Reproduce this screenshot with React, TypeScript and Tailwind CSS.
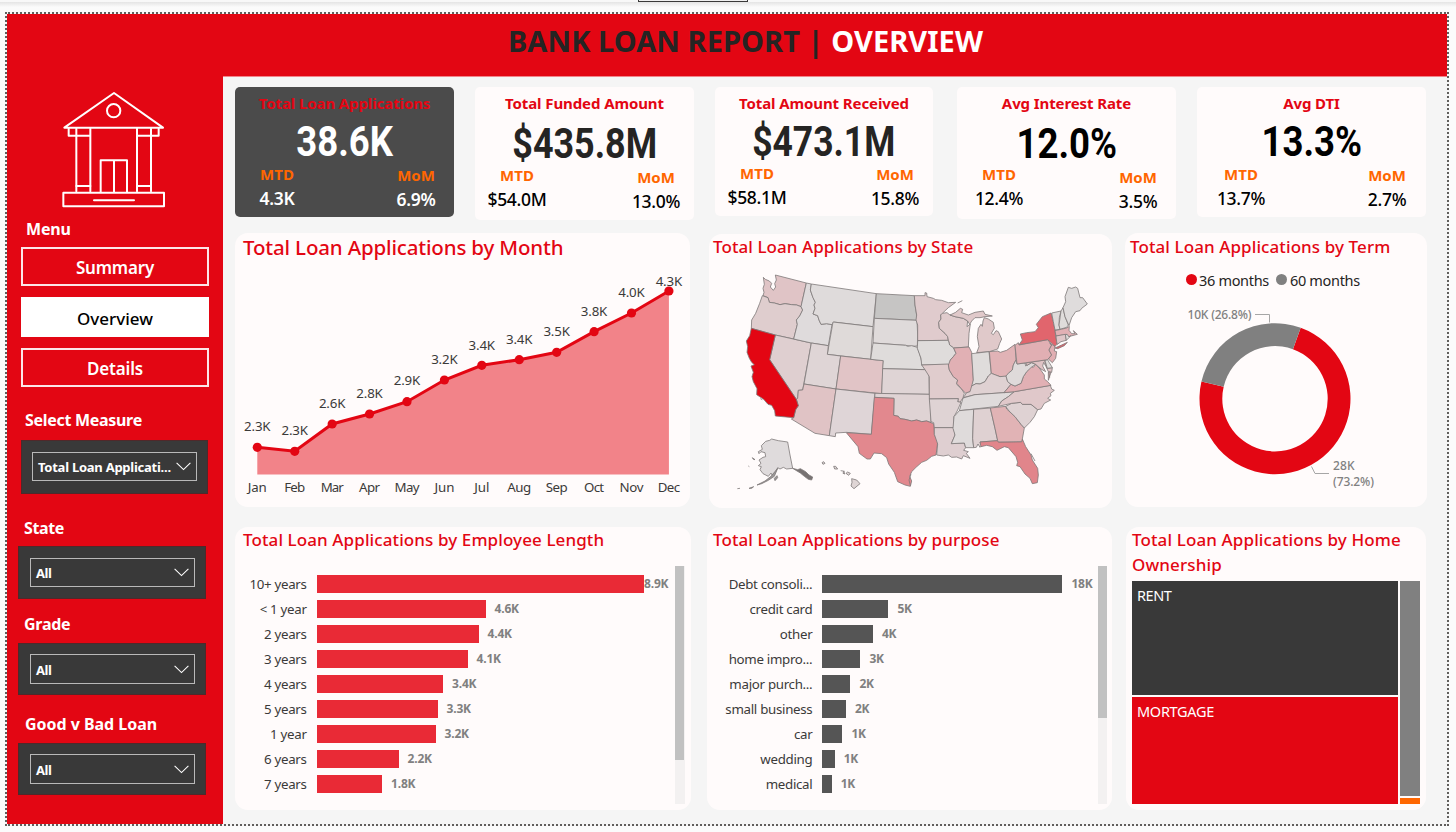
import React from "react";

const kpis = [
  { title: "Total Loan Applications", value: "38.6K", mtd: "4.3K", mom: "6.9%", card: "w-[219px] h-[130px] bg-[#4b4b4b]", valueCls: "text-white mt-[4px]", scale: "scale-x-[0.87]", row: "pl-1", left: "mt-[-3px]", right: "mt-[-2px]", num: "text-white font-semibold" },
  { title: "Total Funded Amount", value: "$435.8M", mtd: "$54.0M", mom: "13.0%", card: "ml-[21px] w-[219px] h-[133px] bg-[#fffbfb]", valueCls: "text-[#252423] mt-[6px]", scale: "scale-x-[0.855]", row: "pl-1", left: "mt-[-4px]", right: "mt-[-2px]", num: "text-black font-medium" },
  { title: "Total Amount Received", value: "$473.1M", mtd: "$58.1M", mom: "15.8%", card: "ml-[21px] w-[218px] h-[129px] bg-[#fffbfb]", valueCls: "text-[#252423] mt-[4px]", scale: "scale-x-[0.845]", row: "pl-1", left: "mt-[-4px]", right: "mt-[-3px]", num: "text-black font-medium" },
  { title: "Avg Interest Rate", value: "12.0%", mtd: "12.4%", mom: "3.5%", card: "ml-[24px] w-[219px] h-[132px] bg-[#fffbfb]", valueCls: "text-black mt-[6px]", scale: "scale-x-[0.87]", row: "pl-1", left: "mt-[-5px]", right: "mt-[-2px]", num: "text-black font-medium" },
  { title: "Avg DTI", value: "13.3%", mtd: "13.7%", mom: "2.7%", card: "ml-[21px] w-[229px] h-[130px] bg-[#fffbfb]", valueCls: "text-black mt-[4px]", scale: "scale-x-[0.87]", row: "pl-1.5 pr-px", left: "mt-[-3px]", right: "mt-[-2px]", num: "text-black font-medium" },
];

const months = [
  { m: "Jan", v: "2.3K", y: 447.3, ly: 426.5 },
  { m: "Feb", v: "2.3K", y: 451.3, ly: 430.5 },
  { m: "Mar", v: "2.6K", y: 424, ly: 403.5 },
  { m: "Apr", v: "2.8K", y: 414, ly: 393.3 },
  { m: "May", v: "2.9K", y: 401.7, ly: 380.5 },
  { m: "Jun", v: "3.2K", y: 380, ly: 359.5 },
  { m: "Jul", v: "3.4K", y: 365.3, ly: 345.3 },
  { m: "Aug", v: "3.4K", y: 359.7, ly: 339.5 },
  { m: "Sep", v: "3.5K", y: 352.3, ly: 331.3 },
  { m: "Oct", v: "3.8K", y: 331.7, ly: 311.3 },
  { m: "Nov", v: "4.0K", y: 313, ly: 292.3 },
  { m: "Dec", v: "4.3K", y: 291, ly: 281.3 },
];
const monthX = (i: number) => 257.3 + 37.42 * i;
const labelWidths: Record<string, number> = { Jan: 19, Feb: 21, Mar: 23, Apr: 21, May: 25, Jun: 20, Jul: 15, Aug: 24, Sep: 22, Oct: 20, Nov: 24, Dec: 22.5 };

const employee = [
  { l: "10+ years", v: "8.9K", w: 327.5 },
  { l: "< 1 year", v: "4.6K", w: 169 },
  { l: "2 years", v: "4.4K", w: 162 },
  { l: "3 years", v: "4.1K", w: 151 },
  { l: "4 years", v: "3.4K", w: 126.5 },
  { l: "5 years", v: "3.3K", w: 121 },
  { l: "1 year", v: "3.2K", w: 119 },
  { l: "6 years", v: "2.2K", w: 82 },
  { l: "7 years", v: "1.8K", w: 65.5 },
];

const purpose = [
  { l: "Debt consoli...", v: "18K", w: 240 },
  { l: "credit card", v: "5K", w: 66 },
  { l: "other", v: "4K", w: 50.5 },
  { l: "home impro...", v: "3K", w: 38 },
  { l: "major purch...", v: "2K", w: 28 },
  { l: "small business", v: "2K", w: 23.5 },
  { l: "car", v: "1K", w: 20 },
  { l: "wedding", v: "1K", w: 12.3 },
  { l: "medical", v: "1K", w: 9.3 },
];

const west: [string, string][] = [
  ["#e0c4c6", "M85,37 L91,43 L103,48 L110,55 L106,66 L115,76 L122,66 L119,56 L124,45 L121,30 L214,54 L198,125 L185,120 L170,119 L150,116 L135,119 L118,114 L103,112 L99,98 L84,92 L87,82 L84,70 L88,58 Z"],
  ["#dfcdce", "M82,92 L99,98 L103,112 L118,114 L135,119 L150,116 L170,119 L185,120 L198,125 L203,135 L194,153 L184,165 L187,178 L176,222 L121,210 L49,190 L50,165 L62,145 L74,115 Z"],
  ["#dfcfd0", "M121,210 L229,234 L203,375 L190,376 L188,400 L184,403 L104,284 Z"],
  ["#dfdbdc", "M214,54 L229,57 L226,75 L234,98 L241,112 L237,120 L240,130 L234,147 L248,152 L252,165 L258,178 L275,176 L291,179 L280,242 L229,234 L176,222 L187,178 L184,165 L194,153 L203,135 L198,125 Z"],
  ["#dfdbdb", "M229,57 L424,86 L414,185 L296,171 L291,179 L275,176 L258,178 L252,165 L248,152 L234,147 L240,130 L237,120 L241,112 L234,98 L226,75 Z"],
  ["#dfdad9", "M294,171 L414,185 L407,283 L277,268 Z"],
  ["#dfd5d6", "M229,234 L280,242 L277,268 L317,273 L303,372 L207,357 Z"],
  ["#e1c4c6", "M317,273 L445,287 L440,386 L303,372 Z"],
  ["#e0c3c5", "M207,357 L303,372 L283,512 L240,505 L169,462 L176,458 L182,434 L190,422 L184,403 L188,400 L190,376 L203,375 Z"],
  ["#dfd5d7", "M303,372 L420,385 L409,508 L334,502 L302,504 L301,515 L283,512 Z"],
  ["#c6c5c4", "M424,86 L538,92 L540,120 L545,150 L546,166 L418,160 Z"],
  ["#dfdada", "M418,160 L546,166 L548,210 L547,243 L530,244 L512,241 L414,234 Z"],
  ["#dfdcdb", "M414,234 L512,241 L518,244 L530,242 L547,247 L555,270 L562,298 L570,314 L443,311 L445,287 L407,283 Z"],
  ["#dfd4d5", "M443,311 L570,314 L580,322 L582,335 L583,388 L440,386 Z"],
  ["#dfd3d4", "M420,385 L583,388 L588,430 L588,473 L575,468 L560,470 L545,465 L530,468 L510,463 L495,461 L490,454 L476,451 L477,400 L419,397 Z"],
  ["#e2888e", "M418,397 L477,400 L476,451 L490,454 L495,461 L510,463 L530,468 L545,465 L560,470 L575,468 L588,473 L597,477 L598,508 L608,530 L606,550 L603,570 L590,574 L575,586 L560,592 L543,607 L530,620 L524,634 L530,648 L526,664 L510,660 L488,650 L478,622 L461,597 L455,578 L440,566 L417,564 L406,582 L396,582 L373,565 L369,545 L334,503 L409,508 Z"],
  ["#e30613", "M49,190 L121,210 L104,284 L184,403 L190,422 L182,434 L176,458 L121,453 L119,437 L110,421 L99,418 L86,403 L65,389 L66,371 L55,350 L51,335 L55,322 L48,303 L58,299 L50,292 L43,280 L36,262 L38,245 L34,228 L44,212 Z"],
  ["#dfdbdc", "M110,522 L130,527 L158,531 L165,570 L173,610 L155,612 L145,607 L135,612 L128,608 L122,620 L112,632 L108,624 L100,634 L84,626 L75,614 L79,605 L70,602 L78,595 L72,585 L84,577 L92,575 L90,563 L78,560 L72,566 L70,560 L82,553 L79,542 L92,529 L104,526 Z"],
  ["#dfd5d5", "M350,641 L365,645 L375,656 L357,671 L348,663 L351,652 Z"],
];

const east: [string, string][] = [
  ["#e0cbcd", "M28,92 L60,92 L60,83 L65,84 L66,95 L85,100 L92,104 L110,106 L130,113 L152,112 L130,128 L112,145 L107,150 L108,162 L101,172 L103,190 L120,205 L128,215 L130,226 L38,227 L38,180 L33,165 L35,150 L30,120 Z"],
  ["#e0cccd", "M112,145 L126,143 L135,150 L150,155 L175,160 L188,168 L186,185 L196,177 L192,205 L190,246 L146,249 L134,240 L130,226 L128,215 L120,205 L103,190 L101,172 L108,162 L107,150 Z"],
  ["#e0c9ca", "M135,150 L152,142 L166,130 L173,133 L170,143 L190,150 L210,142 L235,138 L240,148 L262,153 L240,155 L225,158 L210,158 L200,168 L194,178 L188,168 L175,160 L150,155 Z"],
  ["#e0c9ca", "M238,158 L250,162 L265,172 L268,190 L259,205 L265,209 L273,197 L280,200 L290,222 L284,235 L278,252 L253,260 L215,263 L222,245 L217,215 L220,190 L228,178 L232,184 L234,168 Z"],
  ["#dfdcdb", "M38,227 L130,226 L134,240 L146,249 L153,265 L145,275 L136,285 L135,299 L50,300 L48,280 L37,250 Z"],
  ["#e0cccd", "M50,300 L130,297 L133,315 L145,335 L158,345 L155,358 L170,372 L178,385 L174,398 L165,412 L158,410 L160,401 L73,402 L73,335 L60,314 Z"],
  ["#e1b0b4", "M146,249 L192,246 L200,262 L205,345 L203,362 L197,380 L182,385 L170,372 L155,355 L158,345 L145,335 L133,315 L130,300 L136,285 L145,275 L153,265 Z"],
  ["#dfdcdb", "M200,266 L252,260 L259,325 L250,333 L240,350 L225,357 L213,356 L200,363 L205,345 Z"],
  ["#e1b3b6", "M253,260 L278,258 L286,262 L305,256 L330,238 L333,285 L325,300 L322,315 L310,325 L303,335 L285,335 L272,330 L259,325 Z"],
  ["#dfd1d2", "M175,398 L185,383 L195,380 L200,363 L213,356 L225,357 L240,350 L250,333 L259,325 L272,330 L285,335 L303,333 L308,350 L318,358 L297,383 L210,389 Z"],
  ["#dfdbdb", "M174,399 L210,389 L297,383 L328,380 L310,395 L290,408 L280,424 L163,437 L168,420 Z"],
  ["#dfd3d4", "M73,402 L160,401 L158,410 L168,412 L158,435 L147,455 L146,488 L88,488 L86,473 L78,470 Z"],
  ["#dfcfd1", "M88,488 L146,488 L150,510 L139,536 L178,534 L182,548 L176,556 L190,560 L184,565 L195,580 L175,572 L170,582 L155,576 L140,577 L130,570 L115,573 L95,570 L98,537 L88,508 Z"],
  ["#dfdbdb", "M163,437 L206,433 L203,520 L206,548 L182,548 L178,534 L139,536 L150,510 L144,490 L147,455 Z"],
  ["#dfd1d2", "M206,433 L256,429 L270,490 L278,527 L225,531 L230,542 L225,547 L219,537 L214,547 L206,548 L203,520 Z"],
  ["#e1858b", "M225,531 L278,527 L280,531 L350,530 L352,522 L362,545 L378,570 L382,585 L398,610 L400,630 L397,653 L382,656 L375,640 L360,627 L345,605 L335,602 L338,592 L333,575 L310,548 L298,545 L276,556 L262,545 L245,541 L228,545 Z"],
  ["#e1b3b5", "M256,429 L302,424 L305,432 L330,455 L348,478 L358,489 L352,522 L350,530 L280,531 L278,527 L270,490 Z"],
  ["#dfd2d3", "M302,424 L320,415 L347,412 L352,418 L378,418 L398,434 L388,455 L375,472 L358,489 L348,478 L330,455 L312,438 Z"],
  ["#e0c8ca", "M328,380 L436,361 L440,372 L448,376 L436,385 L438,392 L428,400 L437,405 L418,415 L408,432 L398,434 L378,418 L352,418 L347,412 L320,415 L280,424 L290,408 L310,395 Z"],
  ["#e1b0b4", "M297,383 L318,358 L330,363 L348,355 L355,335 L365,320 L378,305 L385,307 L392,298 L405,312 L418,330 L418,342 L428,350 L438,361 L328,380 Z"],
  ["#dfdada", "M303,333 L310,325 L322,315 L325,300 L333,285 L336,297 L360,294 L362,303 L380,293 L392,298 L380,306 L365,320 L355,335 L348,355 L330,363 L318,358 L308,350 Z"],
  ["#e0c3c5", "M362,294 L418,285 L427,310 L442,308 L440,322 L430,320 L423,305 L416,292 L413,303 L422,320 L408,312 L392,298 L380,293 L366,301 Z"],
  ["#dfdcdb", "M420,287 L427,283 L433,293 L442,308 L427,310 Z"],
  ["#e1b0b4", "M430,321 L438,322 L430,346 Z"],
  ["#e1afb3", "M330,241 L340,233 L342,240 L428,224 L440,240 L432,255 L440,270 L428,284 L336,297 Z"],
  ["#e1aeb2", "M434,235 L450,243 L448,258 L455,260 L452,280 L442,293 L430,282 L440,270 L432,255 L440,240 Z"],
  ["#e1656d", "M342,239 L352,225 L346,207 L365,203 L390,200 L400,188 L394,178 L412,155 L438,144 L445,170 L450,195 L452,213 L456,238 L450,244 L428,224 Z"],
  ["#e1656d", "M450,249 L470,240 L487,232 L478,242 L458,251 Z"],
  ["#dfdbda", "M440,144 L468,138 L463,158 L462,180 L465,193 L450,195 L445,170 Z"],
  ["#dfdcdb", "M468,138 L474,128 L480,155 L490,180 L485,187 L465,193 L462,180 Z"],
  ["#dfdcdc", "M474,128 L482,110 L480,95 L490,67 L500,70 L512,66 L518,70 L525,98 L533,98 L547,117 L530,130 L525,137 L512,140 L500,158 L492,182 L480,155 Z"],
  ["#e1b0b4", "M450,197 L485,189 L493,184 L492,196 L500,206 L510,206 L505,197 L517,208 L498,213 L490,216 L486,208 L453,213 Z"],
  ["#e0c6c8", "M453,213 L481,208 L484,226 L468,230 L457,238 L455,230 Z"],
  ["#dfdcdb", "M481,208 L487,209 L493,217 L484,226 Z"],
];

function Bars({ rows, label, bar }: { rows: { l: string; v: string; w: number }[]; label: string; bar: string }) {
  return (
    <div className="flex flex-col">
      {rows.map((r) => (
        <div key={r.l} className="flex h-[25px] items-center">
          <div className={"shrink-0 pt-px text-right text-[13.3px] leading-5 tracking-[-0.3px] whitespace-nowrap text-[#3b3a39] " + label}>{r.l}</div>
          <div className={"h-[18px] shrink-0 " + bar} style={{ width: r.w }} />
          <div className={"text-[12px] leading-none font-bold tracking-[-0.2px] text-[#808080] " + (r.w > 300 ? "" : "ml-[9px]")}>{r.v}</div>
        </div>
      ))}
    </div>
  );
}

function Slicer({ text, box, field, cls }: { text: string; box: string; field: string; cls: string }) {
  return (
    <div className={"shrink-0 border border-[#50282a] bg-[#393939] " + box}>
      <div className={"flex items-center justify-between border border-[#b9b9b9] pr-[5px] pl-[5px] text-white " + field}>
        <span className={"pt-[3px] text-[13px] font-bold whitespace-nowrap " + cls}>{text}</span>
        <svg width="15" height="9" viewBox="0 0 15 9" fill="none" stroke="#fff" strokeWidth="1.1">
          <path d="M0.6 0.8 L7.5 7.6 L14.4 0.8" />
        </svg>
      </div>
    </div>
  );
}

function Donut() {
  const cx = 1275;
  const cy = 398.7;
  const R = 75.5;
  const r = 52.7;
  const p = (rad: number, deg: number) => {
    const a = (deg * Math.PI) / 180;
    return `${(cx + rad * Math.sin(a)).toFixed(2)} ${(cy - rad * Math.cos(a)).toFixed(2)}`;
  };
  const a0 = 19.9;
  const a1 = 283.1;
  return (
    <svg width="302" height="215" viewBox="1125 292 302 215">
      <path fill="#e30613" d={`M${p(R, a0)} A${R} ${R} 0 1 1 ${p(R, a1)} L${p(r, a1)} A${r} ${r} 0 1 0 ${p(r, a0)} Z`} />
      <path fill="#808080" d={`M${p(R, a1)} A${R} ${R} 0 0 1 ${p(R, a0)} L${p(r, a0)} A${r} ${r} 0 0 0 ${p(r, a1)} Z`} />
      <path d="M1255 314.5 H1269.5 V322.5 M1311.5 466.5 L1315 473.5 H1329" fill="none" stroke="#a6a6a6" />
      <g fill="#808080" fontSize="12" fontWeight="500">
        <text x="1187.5" y="319" textLength="64">10K (26.8%)</text>
        <text x="1333" y="470" textLength="21.5">28K</text>
        <text x="1333" y="486" textLength="41">(73.2%)</text>
      </g>
    </svg>
  );
}

export default function App() {
  return (
    <div className="relative flex h-[832px] w-[1456px] flex-col overflow-hidden bg-[#fbfbfb] font-['Noto_Sans','Open_Sans',sans-serif]">
      <div className="flex h-[12px] shrink-0 flex-col">
        <div className="h-[2px] bg-[#f8f8f8]">
          <div className="ml-[638px] h-[2px] w-[110px] border border-t-0 border-[#3b3a39] bg-[#f0f0f0]" />
        </div>
        <div className="h-[5px] bg-linear-to-b from-[#e4e4e4] to-[#fbfbfb]" />
      </div>

      <div className="ml-[5px] flex h-[814px] w-[1444px] shrink-0 flex-col border-2 border-dotted border-[#605e5c] bg-[#f5f5f5]">
        <header className="flex h-[62px] shrink-0 items-start bg-[#e30613] pt-[7px] pl-[501px]">
          <h1 className="text-[29px] leading-[40px] font-bold tracking-[0.07px] whitespace-nowrap text-[#252423]">
            BANK LOAN REPORT | <span className="text-white">OVERVIEW</span>
          </h1>
        </header>

        <div className="flex h-[748px]">
          <aside className="flex w-[216px] shrink-0 flex-col bg-[#e30613] text-white">
            <svg className="mt-[14px] ml-[53px] shrink-0" width="106" height="120" viewBox="180 270 318 360" fill="none" stroke="#fff" strokeWidth="6" strokeLinejoin="round" strokeLinecap="round">
              <path d="M342 279 L193 383 H489 Z" />
              <circle cx="341" cy="332" r="20" />
              <path d="M206 386 V407 H270 M476 386 V407 H413" />
              <path d="M229 386 V574 M271 386 V574 M411 386 V574 M453 386 V574" />
              <path d="M229 558 H271 M411 558 H453" />
              <path d="M302 575 V481 H381 V575 M342 481 V575" />
              <path d="M190 578 H492 V619 H190 Z M282 601 H402" />
            </svg>
            <div className="mt-[9px] ml-[19px] h-5 text-[16px] leading-5 font-bold tracking-[-0.2px]">Menu</div>
            <nav className="flex flex-col pl-[14px] text-[17px]">
              <button className="mt-2 h-[39px] w-[188px] border-2 border-white/90 pt-[3px] font-semibold tracking-[-0.2px]">Summary</button>
              <button className="mt-[11px] h-[40px] w-[188px] bg-white pt-[3px] font-medium tracking-[0px] text-black">Overview</button>
              <button className="mt-[11px] h-[39px] w-[188px] border-2 border-white/90 pt-[3px] font-semibold tracking-[-0.2px]">Details</button>
            </nav>
            <div className="mt-[23px] ml-[18px] h-5 text-[16px] leading-5 font-bold tracking-[-0.3px]">Select Measure</div>
            <Slicer text="Total Loan Applicati..." cls="tracking-[-0.25px]" box="mt-[10px] ml-[14px] h-[54px] w-[187px] pt-[11px] pl-[10px]" field="h-[29px] w-[165px]" />
            <div className="mt-[24px] ml-[17px] h-5 text-[16px] leading-5 font-bold tracking-[-0.4px]">State</div>
            <Slicer text="All" cls="tracking-[-0.4px]" box="mt-[8px] ml-[11px] h-[53px] w-[188px] pt-[11px] pl-[11px]" field="h-[29px] w-[165px]" />
            <div className="mt-[15px] ml-[17px] h-5 text-[16px] leading-5 font-bold tracking-[-0.25px]">Grade</div>
            <Slicer text="All" cls="tracking-[-0.4px]" box="mt-[9px] ml-[11px] h-[52px] w-[188px] pt-[10px] pl-[11px]" field="h-[30px] w-[165px]" />
            <div className="mt-[19px] ml-[18px] h-5 text-[16px] leading-5 font-bold tracking-[-0.03px]">Good v Bad Loan</div>
            <Slicer text="All" cls="tracking-[-0.4px]" box="mt-[9px] ml-[11px] h-[52px] w-[188px] pt-[10px] pl-[11px]" field="h-[30px] w-[165px]" />
          </aside>

          <main className="flex grow flex-col border-t border-[#f2858b] pt-[10px] pl-3">
            <section className="flex h-[146px] shrink-0 items-start">
              {kpis.map((k) => (
                <div key={k.title} className={"flex shrink-0 flex-col items-center rounded-[5px] " + k.card}>
                  <div className="mt-[6px] h-5 text-[15px] leading-5 font-bold tracking-[-0.1px] whitespace-nowrap text-[#e30613]">{k.title}</div>
                  <div className={"flex h-[50px] items-center font-['Roboto',sans-serif] text-[42px] leading-[40px] font-bold " + k.valueCls}>
                    <span className={k.scale}>{k.value}</span>
                  </div>
                  <div className={"flex w-full items-start justify-between text-center " + k.row}>
                    <div className={"flex w-[76px] flex-col " + k.left}>
                      <span className="h-6 text-[15px] leading-5 font-bold text-[#ff6600]">MTD</span>
                      <span className={"h-5 text-[17.5px] leading-5 tracking-[-0.3px] " + k.num}>{k.mtd}</span>
                    </div>
                    <div className={"flex w-[76px] flex-col " + k.right}>
                      <span className="h-6 text-[15px] leading-5 font-bold text-[#ff6600]">MoM</span>
                      <span className={"h-5 text-[17.5px] leading-5 tracking-[-0.3px] " + k.num}>{k.mom}</span>
                    </div>
                  </div>
                </div>
              ))}
            </section>

            <section className="flex h-[294px] shrink-0 items-start text-[#e30613]">
              <div className="flex h-[274px] w-[455px] flex-col rounded-[13px] bg-[#fffbfb]">
                <h2 className="h-8 pl-2 text-[20.5px] leading-[29px] font-medium tracking-[-0.16px] whitespace-nowrap">Total Loan Applications by Month</h2>
                <svg width="455" height="240" viewBox="235 265 455 240">
                  <path fill="#f28389" d={"M257.3 474.5 " + months.map((d, i) => `L${monthX(i)} ${d.y}`).join(" ") + ` L${monthX(11)} 474.5 Z`} />
                  <polyline fill="none" stroke="#e30613" strokeWidth="3" points={months.map((d, i) => `${monthX(i)},${d.y}`).join(" ")} />
                  {months.map((d, i) => (
                    <g key={d.m} textAnchor="middle" fill="#3b3a39" fontSize="13.3">
                      <text x={monthX(i)} y={d.ly + 4.5} textLength="26.5">{d.v}</text>
                      <circle cx={monthX(i)} cy={d.y} r="4.6" fill="#e30613" />
                      <text x={monthX(i)} y="492" textLength={labelWidths[d.m]}>{d.m}</text>
                    </g>
                  ))}
                </svg>
              </div>

              <div className="mt-px ml-[19px] flex h-[274px] w-[403px] flex-col rounded-[13px] bg-[#fffbfb]">
                <h2 className="h-[31px] pl-1 text-[17px] leading-[26px] font-medium tracking-[0.07px] whitespace-nowrap">Total Loan Applications by State</h2>
                <svg className="ml-[26px]" width="360" height="235" viewBox="0 0 1080 705" stroke="#7d7879" strokeWidth="2.4" strokeLinejoin="round">
                  {west.map(([fill, d]) => (
                    <path key={d} fill={fill} d={d} />
                  ))}
                  <g fill="#9a9797">
                    <path d="M128,610 L118,634 L100,646 L80,656 L66,660 L90,648 L108,634 Z" />
                    <path d="M118,640 L126,632 L128,638 L120,647 Z M42,670 L56,665 L50,670 Z M7,671 L15,670" />
                    <path d="M52,578 L60,584 L55,583 Z M40,603 L43,605 M76,401 L82,404" />
                    <path fill="#777272" d="M173,610 L188,614 L196,611 L212,620 L222,630 L233,636 L230,645 L220,643 L208,634 L196,624 L186,618 Z" />
                  </g>
                  <g fill="#dfd5d5">
                    <path d="M261,593 L266,590 L270,595 L264,598 Z M296,604 L302,604 L308,612 L299,612 Z M317,617 L329,619 M326,619 L330,627 L324,625 Z M333,625 L338,621 L346,625 L341,631 Z" />
                  </g>
                  <g transform="translate(510 0)">
                    {east.map(([fill, d]) => (
                      <path key={d} fill={fill} d={d} />
                    ))}
                    <path fill="none" d="M158,114 L172,107 M497,211 L493,216 M432,322 L434,338 M18,628 L12,645 L16,662 M378,566 L390,588" />
                  </g>
                </svg>
              </div>

              <div className="ml-[13px] flex h-[274px] w-[302px] flex-col rounded-[13px] bg-[#fffbfb]">
                <h2 className="h-[37px] pl-[5px] text-[17px] leading-[27px] font-medium tracking-[0.09px] whitespace-nowrap">Total Loan Applications by Term</h2>
                <div className="flex h-[22px] items-center pb-[3px] pl-[61px] text-[14.5px] leading-5 tracking-[-0.32px] whitespace-nowrap text-[#252423]">
                  <i className="mr-[2px] size-[11px] rounded-full bg-[#e30613]" />
                  36 months
                  <i className="mr-[3px] ml-[7px] size-[11px] rounded-full bg-[#808080]" />
                  60 months
                </div>
                <Donut />
              </div>
            </section>

            <section className="flex shrink-0 items-start text-[#e30613]">
              <div className="flex h-[283px] w-[456px] flex-col rounded-[13px] bg-[#fffbfb]">
                <h2 className="h-[39px] pl-2 text-[17px] leading-[26px] font-medium tracking-[0.1px] whitespace-nowrap">Total Loan Applications by Employee Length</h2>
                <div className="flex justify-between pr-[6px]">
                  <div className="pt-[5px]">
                    <Bars rows={employee} label="w-[81.6px] pr-[10px]" bar="bg-[#e92a36]" />
                  </div>
                  <div className="h-[238px] w-[10px] bg-[#f3f1f1]">
                    <div className="h-[194px] w-[9px] bg-[#c1c1c1]" />
                  </div>
                </div>
              </div>

              <div className="ml-[16px] flex h-[283px] w-[405px] flex-col rounded-[13px] bg-[#fffbfb]">
                <h2 className="h-[39px] pl-1.5 text-[17px] leading-[26px] font-medium tracking-[0.09px] whitespace-nowrap">Total Loan Applications by purpose</h2>
                <div className="flex justify-between pr-[5px]">
                  <div className="pt-[5px]">
                    <Bars rows={purpose} label="w-[115.4px] pr-[10px]" bar="bg-[#555555]" />
                  </div>
                  <div className="h-[238px] w-[9px] bg-[#f3f1f1]">
                    <div className="h-[152px] bg-[#c1c1c1]" />
                  </div>
                </div>
              </div>

              <div className="ml-[14px] flex h-[283px] w-[300px] flex-col rounded-[13px] bg-[#fffbfb]">
                <h2 className="h-[54px] w-[294px] pl-1.5 text-[17px] leading-[25px] font-medium tracking-[0.12px]">
                  Total Loan Applications by Home
                  <br />
                  Ownership
                </h2>
                <div className="ml-[6px] flex h-[223px] gap-[2px] text-[14.5px] leading-5 text-white">
                  <div className="flex w-[266px] flex-col gap-[2px]">
                    <div className="h-[114px] bg-[#393939] pt-[4px] pl-[5px] tracking-[-0.45px]">RENT</div>
                    <div className="flex-1 bg-[#e30613] pt-[4px] pl-[5px] tracking-[-0.3px]">MORTGAGE</div>
                  </div>
                  <div className="flex w-5 flex-col gap-[2px]">
                    <div className="h-[215px] bg-[#808080]" />
                    <div className="flex-1 bg-[#ff6600]" />
                  </div>
                </div>
              </div>
            </section>
          </main>
        </div>
      </div>
    </div>
  );
}
